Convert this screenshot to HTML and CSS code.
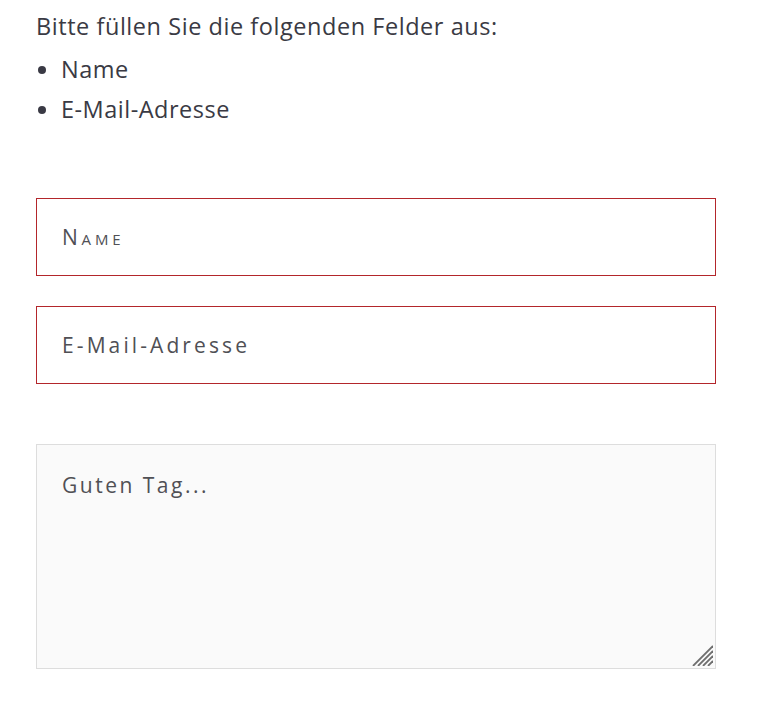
FILE: index.html
```html
<!DOCTYPE html>
<html lang="de">
<head>
<meta charset="utf-8">
<link rel="stylesheet" href="styles.css">
</head>
<body>
<main class="page">
  <p class="intro">Bitte füllen Sie die folgenden Felder aus:</p>
  <ul class="fields">
    <li>Name</li>
    <li>E-Mail-Adresse</li>
  </ul>
  <form class="form">
    <input class="field field-error field-name" type="text" placeholder="Name">
    <input class="field field-error" type="email" placeholder="E-Mail-Adresse">
    <div class="message-wrap">
      <textarea class="field message" placeholder="Guten Tag..."></textarea>
      <svg class="grip" width="21" height="21" viewBox="0 0 21 21" aria-hidden="true">
        <g stroke="#6e6e6e" stroke-width="1.8" stroke-linecap="butt">
          <line x1="21" y1="1" x2="1" y2="21"/>
          <line x1="21" y1="6" x2="6" y2="21"/>
          <line x1="21" y1="11" x2="11" y2="21"/>
          <line x1="21" y1="16" x2="16" y2="21"/>
        </g>
      </svg>
    </div>
  </form>
</main>
</body>
</html>
```

FILE: styles.css
```css
html, body {
  margin: 0;
  padding: 0;
  background: #ffffff;
}
body {
  font-family: "Open Sans", "Lato", sans-serif;
  color: #3a3a44;
}
.page {
  padding: 7px 41px 0 36px;
}
.intro {
  margin: 0;
  font-size: 23.5px;
  letter-spacing: 0.55px;
  line-height: 38px;
}
.fields {
  margin: 4px 0 0 0;
  padding: 0 0 0 25px;
  font-size: 23.5px;
  letter-spacing: 0.5px;
  line-height: 40px;
}
.fields li::marker {
  font-size: 22px;
}
.form {
  display: flex;
  flex-direction: column;
  margin-top: 69px;
}
.field {
  box-sizing: border-box;
  width: 680px;
  margin: 0;
  font-family: "Open Sans", "Lato", sans-serif;
  font-size: 21px;
  letter-spacing: 3.1px;
  color: #444;
  outline: none;
}
.field::placeholder {
  color: #505055;
  opacity: 1;
}
.field-error {
  height: 78px;
  padding: 0 25px;
  border: 1px solid #b3262b;
  background: #fff;
}
.field-error + .field-error {
  margin-top: 30px;
}
.field-name::placeholder {
  font-variant: small-caps;
  letter-spacing: 3.8px;
}
.message-wrap {
  position: relative;
  width: 680px;
  margin-top: 60px;
}
.message {
  display: block;
  height: 225px;
  padding: 26px 25px 20px;
  border: 1px solid #dddddd;
  background: #fafafa;
  resize: none;
  line-height: 28px;
  letter-spacing: 2.5px;
}
.grip {
  position: absolute;
  right: 3px;
  bottom: 3px;
  pointer-events: none;
}
```
